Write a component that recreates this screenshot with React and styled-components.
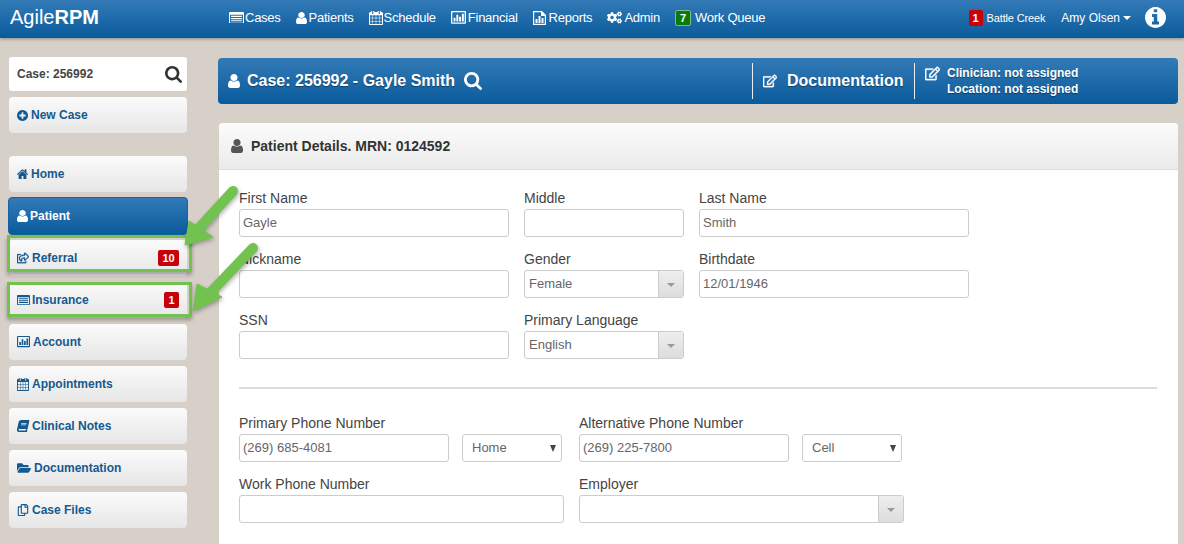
import React from "react";
import styled, { createGlobalStyle } from "styled-components";
import { FaCogs, FaRegEdit, FaRegShareSquare, FaBook, FaFolderOpen, FaRegCopy } from "react-icons/fa";

const GlobalStyle = createGlobalStyle`
  html, body {
    margin: 0;
    height: 544px;
    overflow: hidden;
    background: #d6d0c8;
    font-family: "Liberation Sans", Arial, sans-serif;
    color: #333;
  }
  * { box-sizing: border-box; }
`;

const BLUE_GRADIENT = "linear-gradient(to bottom, #337ab7 0%, #0a5b9c 100%)";

const Page = styled.div`
  position: relative;
  width: 1184px;
  height: 544px;
  overflow: hidden;
`;

const TopBar = styled.header`
  display: flex;
  align-items: center;
  height: 38px;
  padding: 0 18px 3px 10px;
  background: ${BLUE_GRADIENT};
  box-shadow: 0 1px 3px rgba(0, 0, 0, 0.35);
  color: #fff;
`;

const Logo = styled.div`
  width: 219px;
  font-size: 20px;
  b { font-weight: 700; }
`;

const TopNav = styled.nav`
  display: flex;
  align-items: center;
  gap: 15px;
  flex: 1;
`;

const TopLink = styled.span`
  display: flex;
  align-items: center;
  gap: ${(p) => p.$gap ?? 2}px;
  font-size: 13px;
  letter-spacing: -0.25px;
  white-space: nowrap;
`;

const CountBadge = styled.span`
  display: inline-flex;
  align-items: center;
  justify-content: center;
  width: ${(p) => p.$width ?? 15}px;
  height: 16px;
  border-radius: 2px;
  background: ${(p) => (p.$green ? "#0a7a0a" : "#c8000a")};
  border: ${(p) => (p.$green ? "1px solid #7fb88a" : "none")};
  color: #fff;
  font-size: 11px;
  font-weight: 700;
  letter-spacing: 0;
`;

const UserArea = styled.div`
  display: flex;
  align-items: center;
`;

const Location = styled.span`
  display: flex;
  align-items: center;
  gap: 4px;
  font-size: 11px;
  letter-spacing: -0.15px;
  margin-right: 16px;
`;

const UserName = styled.span`
  display: flex;
  align-items: center;
  gap: 3px;
  font-size: 12px;
  margin-right: 14px;
`;

const Caret = styled.i`
  width: 0;
  height: 0;
  border-left: 4px solid transparent;
  border-right: 4px solid transparent;
  border-top: 4px solid #fff;
`;

const Layout = styled.div`
  display: flex;
  padding: 19px 6px 0 9px;
`;

const Sidebar = styled.aside`
  width: 178px;
  flex-shrink: 0;
  display: flex;
  flex-direction: column;
  gap: 6px;
`;

const CaseSearch = styled.div`
  display: flex;
  align-items: center;
  justify-content: space-between;
  height: 34px;
  padding: 0 5px 0 8px;
  background: #fff;
  border-radius: 3px;
  font-size: 12px;
  font-weight: 700;
  color: #444;
`;

const SideButton = styled.div`
  display: flex;
  align-items: center;
  gap: ${(p) => p.$gap ?? 3}px;
  height: 36px;
  padding: 0 8px;
  border-radius: 4px;
  background: linear-gradient(to bottom, #fbfbfb 0%, #e6e6e6 100%);
  font-size: 12px;
  font-weight: 700;
  color: #14598f;
  white-space: nowrap;
`;

const ActiveSideButton = styled(SideButton)`
  height: 38px;
  margin: -1px;
  background: ${BLUE_GRADIENT};
  border: 1px solid #14629f;
  color: #fff;
`;

const SideBadge = styled(CountBadge)`
  margin-left: auto;
`;

const NavGroup = styled.div`
  display: flex;
  flex-direction: column;
  gap: 6px;
  margin-top: 17px;
`;

const Main = styled.main`
  flex: 1;
  margin-left: 31px;
  padding-top: 1px;
  display: flex;
  flex-direction: column;
  gap: 19px;
`;

const CaseHeader = styled.div`
  display: flex;
  align-items: center;
  height: 46px;
  border-radius: 4px;
  background: ${BLUE_GRADIENT};
  color: #fff;
  font-weight: 700;
  text-shadow: 0 1px 1px rgba(0, 0, 0, 0.4);
`;

const CaseTitle = styled.div`
  display: flex;
  align-items: center;
  gap: 7px;
  width: 534px;
  padding-left: 10px;
  font-size: 16px;
`;

const TitleSearch = styled.span`
  display: flex;
  margin-left: 2px;
`;

const HeaderSection = styled.div`
  display: flex;
  height: 36px;
  border-left: 1px solid #e8eef4;
`;

const DocSection = styled(HeaderSection)`
  align-items: center;
  width: 162px;
  gap: 10px;
  padding-left: 10px;
  font-size: 16px;
`;

const ClinicianSection = styled(HeaderSection)`
  align-items: flex-start;
  gap: 7px;
  padding: 2px 0 0 10px;
  font-size: 12px;
  line-height: 16px;
`;

const ClinicianIcon = styled.span`
  display: flex;
  padding-top: 1px;
`;

const ClinicianText = styled.div`
  text-align: center;
`;

const Panel = styled.section`
  margin-left: 1px;
  height: 440px;
  background: #fff;
  border-radius: 4px 4px 0 0;
`;

const PanelHeading = styled.h3`
  display: flex;
  align-items: center;
  gap: 8px;
  height: 47px;
  margin: 0;
  padding-left: 12px;
  border-bottom: 1px solid #ddd;
  border-radius: 4px 4px 0 0;
  background: linear-gradient(to bottom, #fbfbfb 0%, #ebebeb 100%);
  font-size: 14px;
  font-weight: 700;
  color: #333;
`;

const PanelBody = styled.div`
  padding: 20px 21px 0 20px;
`;

const FieldRow = styled.div`
  display: flex;
  gap: ${(p) => p.$gap ?? 15}px;
  height: 61px;
`;

const Field = styled.div`
  width: ${(p) => p.$width}px;
  margin-left: ${(p) => p.$offset ?? 0}px;
  flex-shrink: 0;
`;

const Label = styled.label`
  display: block;
  height: 19px;
  font-size: 14px;
  line-height: 17px;
  color: #444;
`;

const Input = styled.input`
  display: block;
  width: 100%;
  height: 28px;
  padding: 0 3px 2px;
  border: 1px solid #ccc;
  border-radius: 3px;
  background: #fff;
  font-family: inherit;
  font-size: 13px;
  color: #666;
  outline: none;
`;

const Combo = styled.div`
  display: flex;
  height: 28px;
  border: 1px solid #ccc;
  border-radius: 3px;
  overflow: hidden;
  font-size: 13px;
  color: #666;
`;

const ComboValue = styled.span`
  flex: 1;
  padding-left: 4px;
  line-height: 25px;
`;

const ComboButton = styled.span`
  display: flex;
  align-items: center;
  justify-content: center;
  width: 25px;
  border-left: 1px solid #ccc;
  background: linear-gradient(to bottom, #eee, #ddd);
  &::after {
    content: "";
    margin-top: 1px;
    border-left: 4px solid transparent;
    border-right: 4px solid transparent;
    border-top: 4px solid #999;
  }
`;

const SelectBox = styled.div`
  display: flex;
  align-items: center;
  justify-content: space-between;
  width: 100px;
  height: 28px;
  margin-top: 19px;
  padding: 0 5px 2px 9px;
  border: 1px solid #ccc;
  border-radius: 3px;
  font-size: 13px;
  color: #666;
  flex-shrink: 0;
  &::after {
    content: "";
    margin-top: 2px;
    border-left: 3.5px solid transparent;
    border-right: 3.5px solid transparent;
    border-top: 7px solid #444;
  }
`;

const Divider = styled.hr`
  margin: 14px 0 26px;
  border: 0;
  border-top: 2px solid #ddd;
`;

const Highlight = styled.div`
  position: absolute;
  left: 7px;
  top: ${(p) => p.$top}px;
  width: 185px;
  height: ${(p) => p.$height}px;
  border: 3px solid #72c24f;
  box-shadow: 0 3px 4px rgba(0, 0, 0, 0.3);
  pointer-events: none;
`;

const ArrowLayer = styled.svg`
  position: absolute;
  left: 0;
  top: 0;
  pointer-events: none;
  filter: drop-shadow(1px 2px 2px rgba(0, 0, 0, 0.3));
`;

const HeavyStroke = styled.span`
  display: flex;
  flex-shrink: 0;
  svg { stroke: currentColor; stroke-width: 14; }
`;

const VIEW = {
  user: "256 128 1280 1536",
  search: "64 128 1664 1664",
  home: "90 220 1612 1316",
  circle: "128 128 1536 1536",
  calendar: "64 128 1664 1664",
};

function Fa4({ d, view, width = 14, height = width, color = "currentColor" }) {
  return (
    <svg
      width={width}
      height={height}
      viewBox={view}
      preserveAspectRatio="none"
      fill={color}
      style={{ flexShrink: 0 }}
    >
      <path d={d} />
    </svg>
  );
}

const USER = "M1536 1399q0 109-62.5 187t-150.5 78h-854q-88 0-150.5-78t-62.5-187q0-85 8.5-160.5t31.5-152 58.5-131 94-89 134.5-34.5q131 128 313 128t313-128q76 0 134.5 34.5t94 89 58.5 131 31.5 152 8.5 160.5zm-256-887q0 159-112.5 271.5t-271.5 112.5-271.5-112.5-112.5-271.5 112.5-271.5 271.5-112.5 271.5 112.5 112.5 271.5z";
const SEARCH = "M1216 832q0-185-131.5-316.5t-316.5-131.5-316.5 131.5-131.5 316.5 131.5 316.5 316.5 131.5 316.5-131.5 131.5-316.5zm512 832q0 52-38 90t-90 38q-54 0-90-38l-343-342q-179 124-399 124-143 0-273.5-55.5t-225-150-150-225-55.5-273.5 55.5-273.5 150-225 225-150 273.5-55.5 273.5 55.5 225 150 150 225 55.5 273.5q0 220-124 399l343 343q37 37 37 90z";
const HOME = "M1472 992v480q0 26-19 45t-45 19h-384v-384h-256v384h-384q-26 0-45-19t-19-45v-480q0-1 .5-3t.5-3l575-474 575 474q1 2 1 6zm223-69l-62 74q-8 9-21 11h-3q-13 0-21-7l-692-577-692 577q-12 8-24 7-13-2-21-11l-62-74q-8-10-7-23.5t11-21.5l719-599q32-26 76-26t76 26l244 204v-195q0-14 9-23t23-9h192q14 0 23 9t9 23v408l219 182q10 8 11 21.5t-7 23.5z";
const PLUS_CIRCLE = "M1344 960v-128q0-26-19-45t-45-19h-256v-256q0-26-19-45t-45-19h-128q-26 0-45 19t-19 45v256h-256q-26 0-45 19t-19 45v128q0 26 19 45t45 19h256v256q0 26 19 45t45 19h128q26 0 45-19t19-45v-256h256q26 0 45-19t19-45zm320-64q0 209-103 385.5t-279.5 279.5-385.5 103-385.5-103-279.5-279.5-103-385.5 103-385.5 279.5-279.5 385.5-103 385.5 103 279.5 279.5 103 385.5z";
const INFO_CIRCLE = "M1152 1376v-160q0-14-9-23t-23-9h-96v-512q0-14-9-23t-23-9h-320q-14 0-23 9t-9 23v160q0 14 9 23t23 9h96v320h-96q-14 0-23 9t-9 23v160q0 14 9 23t23 9h448q14 0 23-9t9-23zm-128-896v-160q0-14-9-23t-23-9h-192q-14 0-23 9t-9 23v160q0 14 9 23t23 9h192q14 0 23-9t9-23zm640 416q0 209-103 385.5t-279.5 279.5-385.5 103-385.5-103-279.5-279.5-103-385.5 103-385.5 279.5-279.5 385.5-103 385.5 103 279.5 279.5 103 385.5z";
const CALENDAR = "M192 1664h288v-288h-288v288zm352 0h320v-288h-320v288zm-352-352h288v-320h-288v320zm352 0h320v-320h-320v320zm-352-384h288v-288h-288v288zm736 736h320v-288h-320v288zm-384-736h320v-288h-320v288zm768 736h288v-288h-288v288zm-384-352h320v-320h-320v320zm-352-864v-288q0-13-9.5-22.5t-22.5-9.5h-64q-13 0-22.5 9.5t-9.5 22.5v288q0 13 9.5 22.5t22.5 9.5h64q13 0 22.5-9.5t9.5-22.5zm736 864h288v-320h-288v320zm-384-384h320v-288h-320v288zm384 0h288v-288h-288v288zm32-480v-288q0-13-9.5-22.5t-22.5-9.5h-64q-13 0-22.5 9.5t-9.5 22.5v288q0 13 9.5 22.5t22.5 9.5h64q13 0 22.5-9.5t9.5-22.5zm384-64v1280q0 52-38 90t-90 38h-1408q-52 0-90-38t-38-90v-1280q0-52 38-90t90-38h128v-96q0-66 47-113t113-47h64q66 0 113 47t47 113v96h384v-96q0-66 47-113t113-47h64q66 0 113 47t47 113v96h128q52 0 90 38t38 90z";

function ListIcon({ width = 14 }) {
  return (
    <svg width={width} height={(width * 11) / 14} viewBox="0 0 14 11" fill="currentColor" style={{ flexShrink: 0 }}>
      <path d="M1 0h12a1 1 0 0 1 1 1v9a1 1 0 0 1-1 1H1a1 1 0 0 1-1-1V1a1 1 0 0 1 1-1zm0 2.5V10h12V2.5H1z" />
      <path d="M2 3.6h10v1.1H2zM2 5.6h10v1.1H2zM2 7.6h10v1.1H2z" />
    </svg>
  );
}

function ChartBoxIcon({ width = 14 }) {
  return (
    <svg width={width} height={(width * 12) / 14} viewBox="0 0 14 12" fill="currentColor" style={{ flexShrink: 0 }}>
      <path d="M1 0h12a1 1 0 0 1 1 1v10a1 1 0 0 1-1 1H1a1 1 0 0 1-1-1V1a1 1 0 0 1 1-1zm.2 1.2v9.6h11.6V1.2H1.2z" />
      <path d="M2.4 6.4h1.8v3.4H2.4zM5 3.6h1.8v6.2H5zM7.6 5.4h1.8v4.4H7.6zM10.2 2.6H12v7.2h-1.8z" />
    </svg>
  );
}

function ReportIcon() {
  return (
    <svg width="13" height="14" viewBox="0 0 13 14" fill="currentColor" style={{ flexShrink: 0 }}>
      <path d="M0 0h9l4 4v10H0V0zm1.2 1.2v11.6h10.6V5H8V1.2H1.2z" />
      <path d="M2.5 8h2v4h-2zM5.5 5h2v7h-2zM8.5 7h2v5h-2z" />
    </svg>
  );
}

function Arrows() {
  return (
    <ArrowLayer width="1184" height="544" viewBox="0 0 1184 544">
      <g fill="#72c24f" stroke="#72c24f" strokeLinejoin="round">
        <path d="M233 191L200 227" strokeWidth="10" strokeLinecap="round" fill="none" />
        <path d="M185 245L189 221L213 237Z" strokeWidth="1" />
        <path d="M253 248L208 295" strokeWidth="10" strokeLinecap="round" fill="none" />
        <path d="M193 311L197 284L222 297Z" strokeWidth="1" />
      </g>
    </ArrowLayer>
  );
}

export default function App() {
  return (
    <Page>
      <GlobalStyle />
      <TopBar>
        <Logo>
          Agile<b>RPM</b>
        </Logo>
        <TopNav>
          <TopLink $gap={1}><ListIcon width={15} />Cases</TopLink>
          <TopLink><Fa4 d={USER} view={VIEW.user} width={11} height={12} />Patients</TopLink>
          <TopLink $gap={1}><Fa4 d={CALENDAR} view={VIEW.calendar} width={14} height={14} />Schedule</TopLink>
          <TopLink><ChartBoxIcon width={15} />Financial</TopLink>
          <TopLink $gap={3}><ReportIcon />Reports</TopLink>
          <TopLink><FaCogs size={15} />Admin</TopLink>
          <TopLink $gap={4}><CountBadge $green $width={16}>7</CountBadge>Work Queue</TopLink>
        </TopNav>
        <UserArea>
          <Location><CountBadge $width={14}>1</CountBadge>Battle Creek</Location>
          <UserName>Amy Olsen<Caret /></UserName>
          <Fa4 d={INFO_CIRCLE} view={VIEW.circle} width={21} />
        </UserArea>
      </TopBar>

      <Layout>
        <Sidebar>
          <CaseSearch>
            Case: 256992
            <Fa4 d={SEARCH} view={VIEW.search} width={17} color="#333" />
          </CaseSearch>
          <SideButton><Fa4 d={PLUS_CIRCLE} view={VIEW.circle} width={11} />New Case</SideButton>
          <NavGroup>
            <SideButton><Fa4 d={HOME} view={VIEW.home} width={11} height={10} />Home</SideButton>
            <ActiveSideButton $gap={2}><Fa4 d={USER} view={VIEW.user} width={11} height={12} />Patient</ActiveSideButton>
            <SideButton>
              <HeavyStroke><FaRegShareSquare size={12} /></HeavyStroke>Referral
              <SideBadge $width={21}>10</SideBadge>
            </SideButton>
            <SideButton $gap={2}>
              <ListIcon width={13} />Insurance
              <SideBadge>1</SideBadge>
            </SideButton>
            <SideButton $gap={3}><ChartBoxIcon width={13} />Account</SideButton>
            <SideButton $gap={3}><Fa4 d={CALENDAR} view={VIEW.calendar} width={12} height={13} />Appointments</SideButton>
            <SideButton><FaBook size={12} style={{ transform: "skewX(-12deg)" }} />Clinical Notes</SideButton>
            <SideButton><FaFolderOpen size={14} />Documentation</SideButton>
            <SideButton><FaRegCopy size={12} />Case Files</SideButton>
          </NavGroup>
        </Sidebar>

        <Main>
          <CaseHeader>
            <CaseTitle>
              <Fa4 d={USER} view={VIEW.user} width={12} height={14} />
              Case: 256992 - Gayle Smith
              <TitleSearch><Fa4 d={SEARCH} view={VIEW.search} width={18} /></TitleSearch>
            </CaseTitle>
            <DocSection>
              <HeavyStroke><FaRegEdit size={14} /></HeavyStroke>
              Documentation
            </DocSection>
            <ClinicianSection>
              <ClinicianIcon><HeavyStroke><FaRegEdit size={15} /></HeavyStroke></ClinicianIcon>
              <ClinicianText>
                Clinician: not assigned
                <br />
                Location: not assigned
              </ClinicianText>
            </ClinicianSection>
          </CaseHeader>

          <Panel>
            <PanelHeading>
              <Fa4 d={USER} view={VIEW.user} width={12} height={14} color="#555" />
              Patient Details. MRN: 0124592
            </PanelHeading>
            <PanelBody>
              <FieldRow>
                <Field $width={270}><Label>First Name</Label><Input readOnly defaultValue="Gayle" /></Field>
                <Field $width={160}><Label>Middle</Label><Input readOnly /></Field>
                <Field $width={270}><Label>Last Name</Label><Input readOnly defaultValue="Smith" /></Field>
              </FieldRow>
              <FieldRow>
                <Field $width={270}><Label>Nickname</Label><Input readOnly /></Field>
                <Field $width={160}>
                  <Label>Gender</Label>
                  <Combo><ComboValue>Female</ComboValue><ComboButton /></Combo>
                </Field>
                <Field $width={270}><Label>Birthdate</Label><Input readOnly defaultValue="12/01/1946" /></Field>
              </FieldRow>
              <FieldRow>
                <Field $width={270}><Label>SSN</Label><Input readOnly /></Field>
                <Field $width={160}>
                  <Label>Primary Language</Label>
                  <Combo><ComboValue>English</ComboValue><ComboButton /></Combo>
                </Field>
              </FieldRow>
              <Divider />
              <FieldRow $gap={13}>
                <Field $width={210}><Label>Primary Phone Number</Label><Input readOnly defaultValue="(269) 685-4081" /></Field>
                <SelectBox>Home</SelectBox>
                <Field $width={210} $offset={4}><Label>Alternative Phone Number</Label><Input readOnly defaultValue="(269) 225-7800" /></Field>
                <SelectBox>Cell</SelectBox>
              </FieldRow>
              <FieldRow>
                <Field $width={325}><Label>Work Phone Number</Label><Input readOnly /></Field>
                <Field $width={325}>
                  <Label>Employer</Label>
                  <Combo><ComboValue /><ComboButton /></Combo>
                </Field>
              </FieldRow>
            </PanelBody>
          </Panel>
        </Main>
      </Layout>

      <Highlight $top={235} $height={37} />
      <Highlight $top={282} $height={35} />
      <Arrows />
    </Page>
  );
}
